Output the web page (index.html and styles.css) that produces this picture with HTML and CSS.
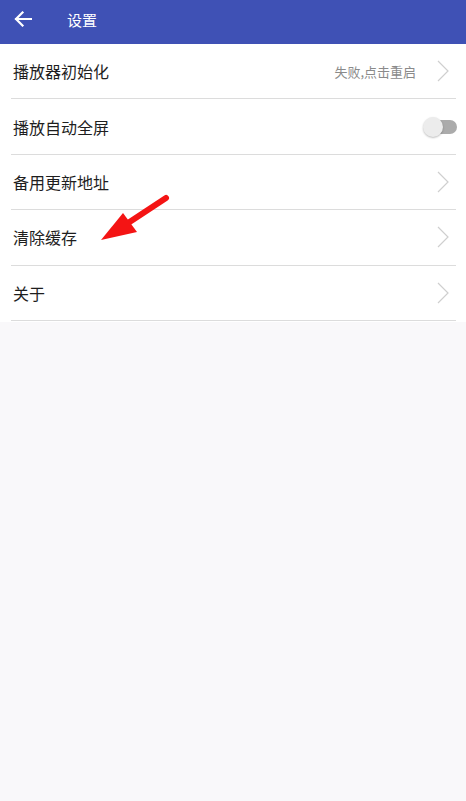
FILE: index.html
```html
<!DOCTYPE html>
<html lang="zh">
<head>
<meta charset="utf-8">
<link rel="stylesheet" href="styles.css">
</head>
<body>
<header class="topbar">
  <svg class="back" width="18" height="16" viewBox="0 0 18 16"><path d="M17 8H2M8.5 1.5L2 8l6.5 6.5" fill="none" stroke="#fff" stroke-width="2.2" stroke-linecap="square"/></svg>
  <span class="title">设置</span>
</header>
<main class="list">
  <div class="row">
    <span class="label">播放器初始化</span>
    <span class="right"><span class="hint">失败,点击重启</span><svg class="chev" width="12" height="22" viewBox="0 0 12 22"><polyline points="1,1 11,11 1,21" fill="none" stroke="#cfcfcf" stroke-width="1.2"/></svg></span>
  </div>
  <div class="row">
    <span class="label">播放自动全屏</span>
    <span class="toggle"><span class="track"></span><span class="thumb"></span></span>
  </div>
  <div class="row">
    <span class="label">备用更新地址</span>
    <svg class="chev" width="12" height="22" viewBox="0 0 12 22"><polyline points="1,1 11,11 1,21" fill="none" stroke="#cfcfcf" stroke-width="1.2"/></svg>
  </div>
  <div class="row">
    <span class="label">清除缓存</span>
    <svg class="chev" width="12" height="22" viewBox="0 0 12 22"><polyline points="1,1 11,11 1,21" fill="none" stroke="#cfcfcf" stroke-width="1.2"/></svg>
  </div>
  <div class="row">
    <span class="label">关于</span>
    <svg class="chev" width="12" height="22" viewBox="0 0 12 22"><polyline points="1,1 11,11 1,21" fill="none" stroke="#cfcfcf" stroke-width="1.2"/></svg>
  </div>
</main>
<svg class="pointer" width="466" height="260" viewBox="0 0 466 260">
  <line x1="166" y1="198" x2="125" y2="225" stroke="#f41414" stroke-width="6" stroke-linecap="round"/>
  <polygon points="101,240 123,213 137,232" fill="#f41414"/>
</svg>
</body>
</html>
```

FILE: styles.css
```css
html, body {
  margin: 0;
  padding: 0;
  background: #f9f8fa;
  font-family: "Noto Sans CJK SC", "Noto Sans", sans-serif;
}
body {
  width: 466px;
  height: 801px;
  position: relative;
  overflow: hidden;
}
.topbar {
  height: 44px;
  background: #3f51b5;
  display: flex;
  align-items: center;
  padding: 0 0 6px 14px;
  box-sizing: border-box;
}
.back {
  display: block;
}
.title {
  color: #fff;
  font-size: 15px;
  margin-left: 35px;
  line-height: 1;
}
.list {
  background: #fff;
  padding: 0 10px 1px 11px;
}
.row {
  height: 55.4px;
  box-sizing: border-box;
  border-bottom: 1px solid #dcdcdc;
  display: flex;
  align-items: center;
  justify-content: space-between;
  padding-left: 2px;
}
.label {
  font-size: 16px;
  color: #1e1e1e;
  line-height: 1;
}
.right {
  display: flex;
  align-items: center;
}
.hint {
  font-size: 13px;
  color: #8a8a8a;
  margin-right: 21px;
}
.chev {
  display: block;
  margin-right: 7px;
}
.toggle {
  position: relative;
  width: 34px;
  height: 20px;
  margin-right: -1px;
}
.track {
  position: absolute;
  left: 10px;
  top: 3px;
  width: 24px;
  height: 14px;
  border-radius: 7px;
  background: #ababab;
}
.thumb {
  position: absolute;
  left: 0;
  top: 0;
  width: 20px;
  height: 20px;
  border-radius: 50%;
  background: #ececec;
  box-shadow: 0 1px 2px rgba(0,0,0,0.25);
}
.pointer {
  position: absolute;
  left: 0;
  top: 0;
}
```
